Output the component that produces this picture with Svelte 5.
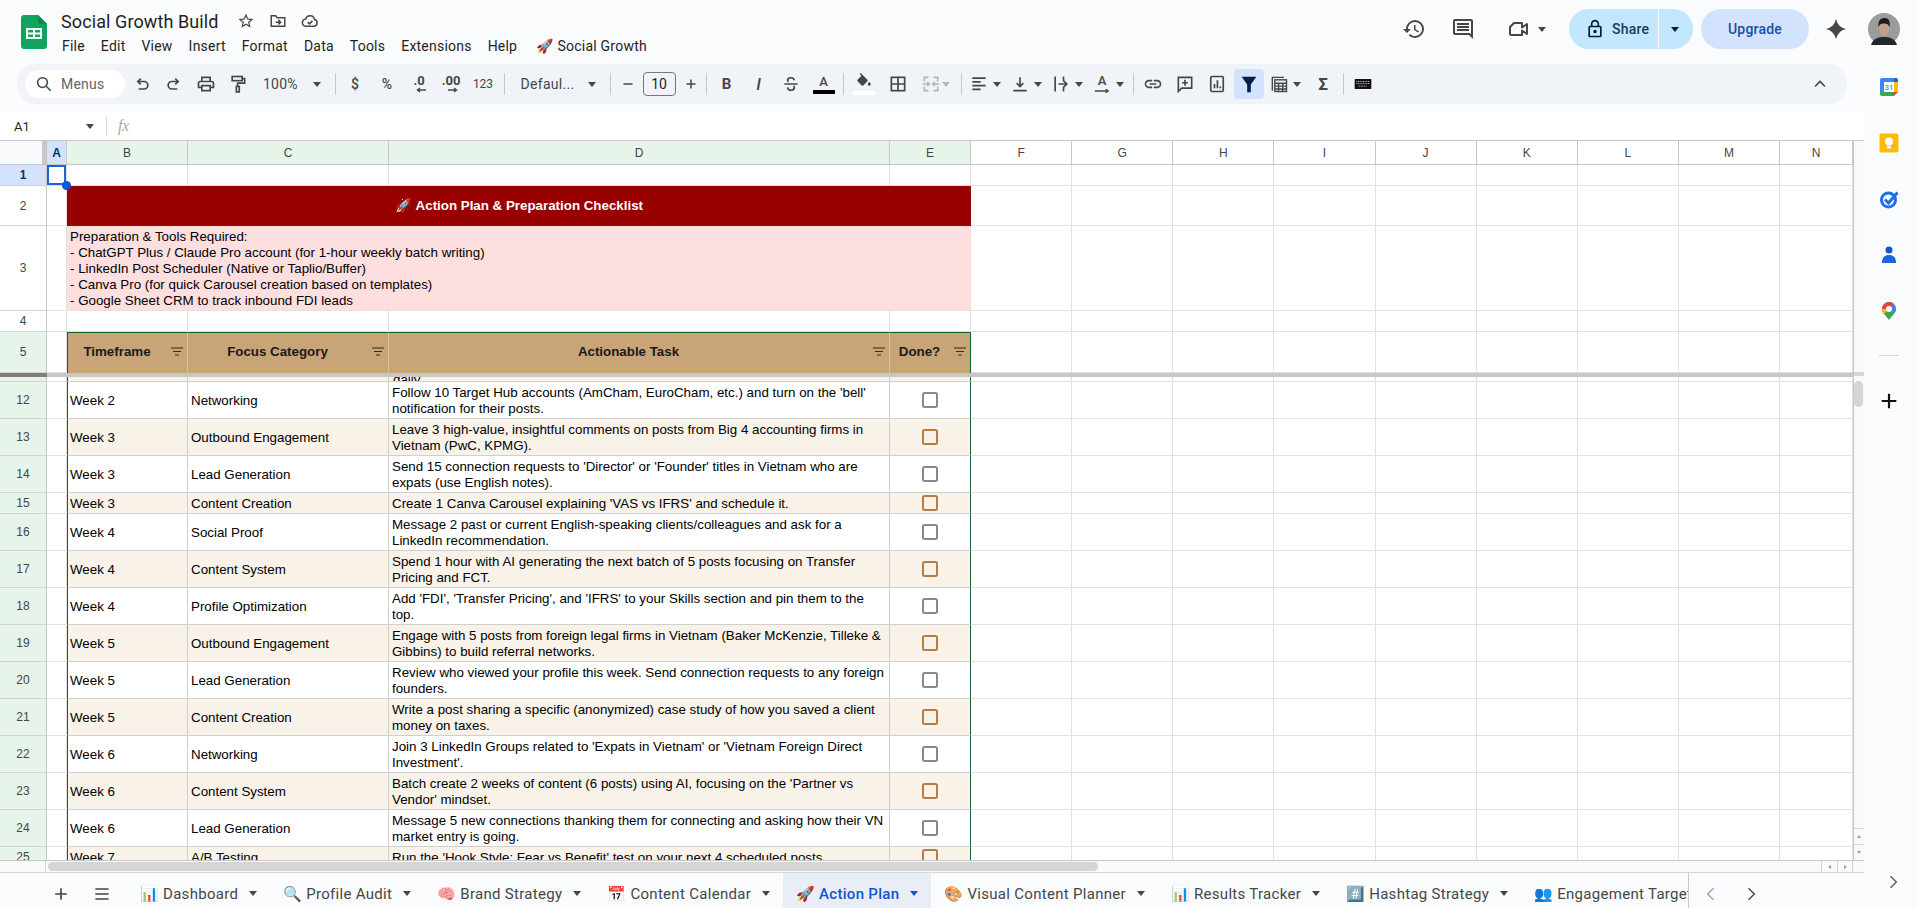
<script>
  const cols = ['F','G','H','I','J','K','L','M','N'];
  const rows = [
    [12,'Week 2','Networking',"Follow 10 Target Hub accounts (AmCham, EuroCham, etc.) and turn on the 'bell' notification for their posts."],
    [13,'Week 3','Outbound Engagement',"Leave 3 high-value, insightful comments on posts from Big 4 accounting firms in Vietnam (PwC, KPMG)."],
    [14,'Week 3','Lead Generation',"Send 15 connection requests to 'Director' or 'Founder' titles in Vietnam who are expats (use English notes)."],
    [15,'Week 3','Content Creation',"Create 1 Canva Carousel explaining 'VAS vs IFRS' and schedule it."],
    [16,'Week 4','Social Proof',"Message 2 past or current English-speaking clients/colleagues and ask for a LinkedIn recommendation."],
    [17,'Week 4','Content System',"Spend 1 hour with AI generating the next batch of 5 posts focusing on Transfer Pricing and FCT."],
    [18,'Week 4','Profile Optimization',"Add 'FDI', 'Transfer Pricing', and 'IFRS' to your Skills section and pin them to the top."],
    [19,'Week 5','Outbound Engagement',"Engage with 5 posts from foreign legal firms in Vietnam (Baker McKenzie, Tilleke & Gibbins) to build referral networks."],
    [20,'Week 5','Lead Generation',"Review who viewed your profile this week. Send connection requests to any foreign founders."],
    [21,'Week 5','Content Creation',"Write a post sharing a specific (anonymized) case study of how you saved a client money on taxes."],
    [22,'Week 6','Networking',"Join 3 LinkedIn Groups related to 'Expats in Vietnam' or 'Vietnam Foreign Direct Investment'."],
    [23,'Week 6','Content System',"Batch create 2 weeks of content (6 posts) using AI, focusing on the 'Partner vs Vendor' mindset."],
    [24,'Week 6','Lead Generation',"Message 5 new connections thanking them for connecting and asking how their VN market entry is going."],
    [25,'Week 7','A/B Testing',"Run the 'Hook Style: Fear vs Benefit' test on your next 4 scheduled posts."]
  ];
  const tabs = [
    ['📊','Dashboard'],['🔍','Profile Audit'],['🧠','Brand Strategy'],['📅','Content Calendar'],
    ['🚀','Action Plan'],['🎨','Visual Content Planner'],['📊','Results Tracker'],['#️⃣','Hashtag Strategy'],['👥','Engagement Targets']
  ];
  const menus = ['File','Edit','View','Insert','Format','Data','Tools','Extensions','Help'];
  const prep = ['Preparation & Tools Required:','- ChatGPT Plus / Claude Pro account (for 1-hour weekly batch writing)','- LinkedIn Post Scheduler (Native or Taplio/Buffer)','- Canva Pro (for quick Carousel creation based on templates)','- Google Sheet CRM to track inbound FDI leads'];
</script>

<div class="page">
  <header class="top">
    <svg class="logo" viewBox="0 0 26 34"><path d="M3 0H17L26 9V31a3 3 0 0 1-3 3H3a3 3 0 0 1-3-3V3a3 3 0 0 1 3-3Z" fill="#11a45f"/><path d="M17 0L26 9H19a2 2 0 0 1-2-2Z" fill="#0c8a4e"/><path d="M5 13H21V24H5ZM7 15V17.5H12V15ZM14 15V17.5H19V15ZM7 19.5V22H12V19.5ZM14 19.5V22H19V19.5Z" fill="#fff" fill-rule="evenodd"/></svg>
    <div class="titles">
      <div class="title-line">
        <span class="doc-title">Social Growth Build</span>
        <svg class="ti star" viewBox="0 0 24 24"><path d="M22 9.24l-7.19-.62L12 2 9.19 8.63 2 9.24l5.46 4.73L5.82 21 12 17.27 18.18 21l-1.63-7.03L22 9.24zM12 15.4l-3.76 2.27 1-4.28-3.32-2.88 4.38-.38L12 6.1l1.71 4.04 4.38.38-3.32 2.88 1 4.28L12 15.4z" fill="#444746"/></svg>
        <svg class="ti" viewBox="0 0 24 24" fill="none" stroke="#444746" stroke-width="2"><path d="M3 19V5h6l2 2.5h10V19Z"/><path d="M9 13.5h6M12.5 10.5l3 3-3 3"/></svg>
        <svg class="ti" viewBox="0 0 24 24" fill="none" stroke="#444746" stroke-width="2"><path d="M7 19a4.8 4.8 0 0 1-.7-9.6A6 6 0 0 1 18 10a4.6 4.6 0 0 1-.5 9Z"/><path d="M9 13.5l2.3 2.3 4-4"/></svg>
      </div>
      <nav class="menu">
        {#each menus as m}<span>{m}</span>{/each}
        <span class="ext"><span class="emo">🚀</span> Social Growth</span>
      </nav>
    </div>
    <div class="top-right">
      <svg class="tr hist" viewBox="0 0 24 24"><path d="M13 3a9 9 0 0 0-9 9H1l3.89 3.89.07.14L9 12H6c0-3.87 3.13-7 7-7s7 3.13 7 7-3.13 7-7 7c-1.93 0-3.68-.79-4.94-2.06l-1.42 1.42A8.954 8.954 0 0 0 13 21a9 9 0 0 0 0-18zm-1 5v5l4.28 2.54.72-1.21-3.5-2.08V8H12z" fill="#444746"/></svg>
      <svg class="tr cmt" viewBox="0 0 24 24"><path d="M21.99 4c0-1.1-.89-2-1.99-2H4c-1.1 0-2 .9-2 2v12c0 1.1.9 2 2 2h14l4 4-.01-18zM20 4v13.17L18.83 16H4V4h16zM6 12h12v2H6zm0-3h12v2H6zm0-3h12v2H6z" fill="#444746"/></svg>
      <svg class="tr meet" viewBox="0 0 24 24" fill="none" stroke="#444746" stroke-width="2" stroke-linejoin="round"><path d="M8 6H16V10.5L21 7V17L16 13.5V18H5.5A1.5 1.5 0 0 1 4 16.5V10Z"/></svg>
      <i class="caret meet-c"></i>
      <div class="share">
        <span class="share-l">
          <svg class="lock" viewBox="0 0 24 24"><path d="M18 8h-1V6c0-2.76-2.24-5-5-5S7 3.24 7 6v2H6c-1.1 0-2 .9-2 2v10c0 1.1.9 2 2 2h12c1.1 0 2-.9 2-2V10c0-1.1-.9-2-2-2zM9 6c0-1.66 1.34-3 3-3s3 1.34 3 3v2H9V6zm9 14H6V10h12v10zm-6-3c1.1 0 2-.9 2-2s-.9-2-2-2-2 .9-2 2 .9 2 2 2z" fill="#001d35"/></svg>
          Share
        </span>
        <span class="share-r"><i class="caret dark"></i></span>
      </div>
      <div class="upgrade">Upgrade</div>
      <svg class="gem" viewBox="0 0 24 24"><path d="M12 1Q14 10 23 12 14 14 12 23 10 14 1 12 10 10 12 1Z" fill="#444746"/></svg>
      <svg class="avatar" viewBox="0 0 32 32"><circle cx="16" cy="16" r="16" fill="#9a9d9c"/><path d="M3 32C5 25 11 24 16 24S27 25 29 32Z" fill="#23262a"/><ellipse cx="16" cy="15" rx="5" ry="7.500" fill="#c4a08c"/><path d="M10.500 14C9.500 7 13 5 17 5 21 5 22.500 9 21.500 14 20.500 11 18 10 15 10.500 13 10.500 11.500 11.500 10.500 14Z" fill="#1b1c1e"/></svg>
    </div>
  </header>

  <div class="body">
    <div class="left">
      <div class="toolbar">
        <div class="menus">
          <svg class="ic18" viewBox="0 0 24 24" fill="none" stroke="#444746" stroke-width="2"><circle cx="10" cy="10" r="6.500"/><path d="M15 15L21 21"/></svg>
          <span>Menus</span>
        </div>
        <button class="b first"><svg viewBox="0 0 24 24" fill="none" stroke="#444746" stroke-width="2"><path d="M7 9H14.500a4.500 4.500 0 0 1 0 9H8"/><path d="M10.500 5.500L7 9l3.500 3.500"/></svg></button>
        <button class="b"><svg viewBox="0 0 24 24" fill="none" stroke="#444746" stroke-width="2"><path d="M17 9H9.500a4.500 4.500 0 0 0 0 9H16"/><path d="M13.500 5.500L17 9l-3.500 3.500"/></svg></button>
        <button class="b"><svg viewBox="0 0 24 24"><path d="M19 8h-1V3H6v5H5c-1.660 0-3 1.340-3 3v6h4v4h12v-4h4v-6c0-1.660-1.340-3-3-3zM8 5h8v3H8V5zm8 12v2H8v-4h8v2zm2-2v-2H6v2H4v-4c0-.55.45-1 1-1h14c.55 0 1 .45 1 1v4h-2z" fill="#444746"/></svg></button>
        <button class="b"><svg viewBox="0 0 24 24" fill="none" stroke="#444746" stroke-width="2"><rect x="5" y="3" width="12" height="5"/><path d="M17 5.500H20V11H11.500V15"/><rect x="10" y="15" width="3.500" height="6.500"/></svg></button>
        <div class="zoom"><span>100%</span><i class="caret"></i></div>
        <i class="sep"></i>
        <button class="b t0">$</button>
        <button class="b t0">%</button>
        <button class="b t0 dec"><span>.0</span><svg viewBox="0 0 12 6"><path d="M11 3H3M5 1L2.500 3 5 5" fill="none" stroke="#444746" stroke-width="1.500"/></svg></button>
        <button class="b t0 dec"><span>.00</span><svg viewBox="0 0 12 6"><path d="M1 3H9M7 1L9.500 3 7 5" fill="none" stroke="#444746" stroke-width="1.500"/></svg></button>
        <button class="b t0 num">123</button>
        <i class="sep s2"></i>
        <div class="font"><span>Defaul...</span><i class="caret"></i></div>
        <i class="sep"></i>
        <button class="pm"><svg viewBox="0 0 24 24"><path d="M6 12H18" stroke="#444746" stroke-width="2"/></svg></button>
        <div class="fsize">10</div>
        <button class="pm"><svg viewBox="0 0 24 24"><path d="M6 12H18M12 6V18" stroke="#444746" stroke-width="2"/></svg></button>
        <i class="sep s3"></i>
        <button class="b t0 bold">B</button>
        <button class="b t0 ital">I</button>
        <button class="b"><svg viewBox="0 0 24 24" fill="none" stroke="#444746" stroke-width="2"><path d="M16 7.500C15.500 5.500 14 4.500 12 4.500S8 5.700 8 7.500c0 .8.3 1.500 1 2M8 16c.3 2.300 2 3.500 4 3.500s4-1.200 4-3.200c0-.8-.3-1.500-1-2M4 12H20"/></svg></button>
        <button class="b colA"><span>A</span><i></i></button>
        <i class="sep"></i>
        <button class="b fill"><svg viewBox="0 0 24 24"><path d="M16.560 8.940L7.620 0 6.210 1.410l2.380 2.380-5.150 5.150c-.59.59-.59 1.540 0 2.120l5.500 5.500c.29.29.68.44 1.060.44s.77-.15 1.060-.44l5.500-5.500c.59-.58.59-1.530 0-2.120zM19 11.500s-2 2.170-2 3.500c0 1.100.9 2 2 2s2-.9 2-2c0-1.330-2-3.500-2-3.500z" fill="#444746"/></svg><i></i></button>
        <button class="b ml2"><svg viewBox="0 0 24 24" fill="none" stroke="#444746" stroke-width="2"><rect x="4" y="4" width="16" height="16"/><path d="M12 4V20M4 12H20"/></svg></button>
        <div class="merge"><svg viewBox="0 0 24 24" fill="none" stroke="#b4b6b8" stroke-width="2"><path d="M9 4H4V9M4 15v5h5M15 4h5v5M20 15v5h-5M2 12H9M15 12H22M7.500 9.500L10 12l-2.500 2.500M16.500 9.500L14 12l2.500 2.500"/></svg><i class="caret light"></i></div>
        <i class="sep"></i>
        <div class="g first-g"><svg viewBox="0 0 24 24" fill="none" stroke="#444746" stroke-width="2"><path d="M4 5H20M4 9.500H14M4 14H20M4 18.500H14"/></svg><i class="caret"></i></div>
        <div class="g"><svg viewBox="0 0 24 24" fill="none" stroke="#444746" stroke-width="2"><path d="M12 4V15M8 11l4 4 4-4M4 20H20"/></svg><i class="caret"></i></div>
        <div class="g"><svg viewBox="0 0 24 24" fill="none" stroke="#444746" stroke-width="2"><path d="M5 3V21M15 3V9M15 15V21M9 12H19M15.500 8.500L19 12l-3.500 3.500"/></svg><i class="caret"></i></div>
        <div class="g"><span class="rot"><span>A</span><svg viewBox="0 0 20 6"><path d="M2 3H17M14 1L17 3 14 5" fill="none" stroke="#444746" stroke-width="1.500"/></svg></span><i class="caret"></i></div>
        <i class="sep"></i>
        <button class="b"><svg viewBox="0 0 24 24"><path d="M3.900 12c0-1.710 1.390-3.100 3.100-3.100h4V7H7c-2.760 0-5 2.240-5 5s2.240 5 5 5h4v-1.900H7c-1.710 0-3.100-1.390-3.100-3.100zM8 13h8v-2H8v2zm9-6h-4v1.900h4c1.710 0 3.100 1.390 3.100 3.100s-1.390 3.100-3.100 3.100h-4V17h4c2.760 0 5-2.240 5-5s-2.240-5-5-5z" fill="#444746"/></svg></button>
        <button class="b"><svg viewBox="0 0 24 24" fill="none" stroke="#444746" stroke-width="2"><path d="M4 4H20V17H8L4 21Z"/><path d="M12 7V14M8.500 10.500H15.500"/></svg></button>
        <button class="b"><svg viewBox="0 0 24 24" fill="none" stroke="#444746" stroke-width="2"><rect x="4.500" y="3" width="15" height="18" rx="1.500"/><path d="M9 17V12M12.500 17V7.500M16 17V15"/></svg></button>
        <button class="b filt"><svg viewBox="0 0 24 24"><path d="M4 4H20L14 12.500V21H10V12.500Z" fill="#041e49"/></svg></button>
        <div class="g"><svg viewBox="0 0 24 24" fill="none" stroke="#444746" stroke-width="1.700"><path d="M4 20V4H18"/><rect x="7" y="7" width="14" height="14"/><path d="M7 11H21M7 14.500H21M7 18H21M11.500 11V21M16.500 11V21"/></svg><i class="caret"></i></div>
        <button class="b t0 sig">Σ</button>
        <i class="sep"></i>
        <button class="b"><svg viewBox="0 0 24 24"><rect x="2" y="6" width="20" height="12" rx="1" fill="#111"/><path d="M4 9H20M4 11.500H20M7 14.500H17" stroke="#ddd" stroke-width="1" stroke-dasharray="1.200 .8"/></svg></button>
        <svg class="chev" viewBox="0 0 24 24" fill="none" stroke="#444746" stroke-width="2"><path d="M6 15L12 9l6 6"/></svg>
      </div>

      <div class="formula">
        <span class="cellref">A1</span><i class="caret"></i><i class="fsep"></i><span class="fx">fx</span>
      </div>

      <div class="sheet">
        <div class="cells">
          <div class="gr colhead">
            <div class="corner"></div>
            <div class="ch sel">A</div>
            <div class="ch hi">B</div><div class="ch hi">C</div><div class="ch hi">D</div><div class="ch hi">E</div>
            {#each cols as c}<div class="ch">{c}</div>{/each}
          </div>

          <div class="gr r21">
            <div class="rh sel">1</div>
            <div class="c a1"></div>
            <div class="c"></div><div class="c"></div><div class="c"></div><div class="c"></div>
            {#each cols as c}<div class="c"></div>{/each}
          </div>
          <div class="gr r40">
            <div class="rh">2</div><div class="c"></div>
            <div class="c banner"><span class="emo">🚀</span> Action Plan &amp; Preparation Checklist</div>
            {#each cols as c}<div class="c"></div>{/each}
          </div>
          <div class="gr r85">
            <div class="rh">3</div><div class="c"></div>
            <div class="c prep"><div>{#each prep as p}<div>{p}</div>{/each}</div></div>
            {#each cols as c}<div class="c"></div>{/each}
          </div>
          <div class="gr r21">
            <div class="rh">4</div><div class="c"></div>
            <div class="c"></div><div class="c"></div><div class="c"></div><div class="c"></div>
            {#each cols as c}<div class="c"></div>{/each}
          </div>
          <div class="gr r41">
            <div class="rh hi">5</div><div class="c"></div>
            {#each ['Timeframe','Focus Category','Actionable Task','Done?'] as h, i}
              <div class="c th" class:lft={i===0} class:rgt={i===3}>
                <span>{h}</span>
                <svg class="fl" viewBox="0 0 12 9"><path d="M0 1H12M2 4.500H10M4 8H8" stroke="#2b2b2b" stroke-width="1.100"/></svg>
              </div>
            {/each}
            {#each cols as c}<div class="c"></div>{/each}
          </div>

          <div class="freeze"><i></i><b></b></div>

          <div class="gr r5">
            <div class="rh hi"></div><div class="c"></div>
            <div class="c t beige lft"></div><div class="c t beige"></div>
            <div class="c t beige sliver"><span>daily</span></div>
            <div class="c t beige rgt"></div>
            {#each cols as c}<div class="c"></div>{/each}
          </div>

          {#each rows as r}
            <div class="gr" class:r37={r[0]!==15 && r[0]!==25} class:r21={r[0]===15 || r[0]===25}>
              <div class="rh hi">{r[0]}</div><div class="c"></div>
              <div class="c t lft" class:beige={r[0]%2===1}>{r[1]}</div>
              <div class="c t" class:beige={r[0]%2===1}>{r[2]}</div>
              <div class="c t task" class:beige={r[0]%2===1}>{r[3]}</div>
              <div class="c t rgt chk" class:beige={r[0]%2===1}><i class="box" class:tan={r[0]%2===1}></i></div>
              {#each cols as c}<div class="c"></div>{/each}
            </div>
          {/each}
        </div>
        <div class="vscroll">
          <i class="vs-gap1"></i>
          <i class="vs-freeze"></i>
          <i class="vs-gap2"></i>
          <i class="vs-thumb"></i>
          <i class="vs-fill"></i>
          <div class="vs-btn"><span class="up"></span></div>
          <div class="vs-btn"><span class="dn"></span></div>
        </div>
      </div>

      <div class="hscroll">
        <i class="hs-corner"></i>
        <i class="hs-thumb"></i>
        <span class="hs-btn"><i class="lf"></i></span>
        <span class="hs-btn"><i class="rt"></i></span>
      </div>

      <div class="tabs">
        <svg class="add" viewBox="0 0 24 24"><path d="M5 12H19M12 5V19" stroke="#444746" stroke-width="2"/></svg>
        <svg class="all" viewBox="0 0 24 24"><path d="M4 6H20M4 12H20M4 18H20" stroke="#444746" stroke-width="2"/></svg>
        <div class="strip">
          {#each tabs as t, i}
            <div class="tab" class:on={i===4}>
              <span class="emo tabemo">{t[0]}</span>
              <span class="tl">{t[1]}</span>
              <i class="caret"></i>
            </div>
          {/each}
        </div>
        <svg class="nav dim" viewBox="0 0 24 24" fill="none" stroke="#9aa0a6" stroke-width="1.600"><path d="M15 5L8 12l7 7"/></svg>
        <svg class="nav" viewBox="0 0 24 24" fill="none" stroke="#444746" stroke-width="1.600"><path d="M9 5l7 7-7 7"/></svg>
      </div>
    </div>

    <aside class="side">
      <svg class="si" viewBox="0 0 20 20"><path d="M1 3a2 2 0 0 1 2-2H15V5H5V15H1Z" fill="#4285f4"/><path d="M15 1H17a2 2 0 0 1 2 2V5H15Z" fill="#1967d2"/><path d="M15 5H19V15H15Z" fill="#fbbc04"/><path d="M1 15H15V19H3a2 2 0 0 1-2-2Z" fill="#34a853"/><path d="M15 15H19L15 19Z" fill="#ea4335"/><rect x="5" y="5" width="10" height="10" fill="#fff"/><text x="10" y="13" text-anchor="middle" class="cal31">31</text></svg>
      <svg class="si" viewBox="0 0 20 20"><rect x="0.500" y="0.500" width="19" height="19" rx="2" fill="#fbbc04"/><circle cx="10" cy="8.500" r="4" fill="#fff"/><rect x="8" y="13" width="4" height="2.500" fill="#fff"/></svg>
      <svg class="si" viewBox="0 0 20 20" fill="none"><circle cx="9.500" cy="11" r="7" stroke="#1f6fe8" stroke-width="3"/><path d="M6 10.500L9.500 14 18.500 3.500" stroke="#1f6fe8" stroke-width="3"/></svg>
      <svg class="si" viewBox="0 0 20 20"><circle cx="10" cy="5" r="3.500" fill="#0b57d0"/><path d="M3 18C3 12 6 10 10 10S17 12 17 18Z" fill="#1a66db"/></svg>
      <svg class="si" viewBox="0 0 20 20"><path d="M10 1a7 7 0 0 1 7 7c0 4-4 6.500-7 11C7 14.500 3 12 3 8a7 7 0 0 1 7-7Z" fill="#34a853"/><path d="M10 1a7 7 0 0 1 5 2.100L5 13C3.800 11.500 3 10 3 8a7 7 0 0 1 7-7Z" fill="#ea4335"/><path d="M15 3.100A7 7 0 0 1 17 8c0 1.500-.6 2.800-1.500 4L10 8Z" fill="#4285f4"/><path d="M10 8L5 13 3.500 10.500 3 8Z" fill="#fbbc04"/><circle cx="10" cy="8" r="3" fill="#fff"/></svg>
      <i class="sd"></i>
      <svg class="sp" viewBox="0 0 24 24"><path d="M4 12H20M12 4V20" stroke="#111" stroke-width="2.400"/></svg>
      <svg class="collapse" viewBox="0 0 24 24" fill="none" stroke="#5f6368" stroke-width="1.800"><path d="M9 5l7 7-7 7"/></svg>
    </aside>
  </div>
</div>

<style>
  :global(body) { margin: 0; background: #f9fbfd; }
  .page {
    width: 1917px; height: 908px; overflow: hidden; background: #f9fbfd;
    font-family: Roboto, "Noto Sans", sans-serif; color: #1f1f1f;
  }
  i { display: block; font-style: normal; }
  .emo { font-family: "Noto Color Emoji", "Noto Emoji", "DejaVu Sans", sans-serif; font-weight: 400; }

  .caret { width: 0; height: 0; border: 4px solid transparent; border-top: 5px solid #444746; border-bottom: 0; flex: none; }
  .caret.dark { border-top-color: #001d35; }
  .caret.light { border-top-color: #b4b6b8; }

  /* top */
  .top { height: 64px; display: flex; align-items: flex-start; position: relative; }
  .logo { width: 26px; height: 34px; margin: 15px 14px 0 21px; flex: none; }
  .titles { padding-top: 8px; }
  .title-line { display: flex; align-items: center; height: 26px; }
  .doc-title { font-size: 18px; letter-spacing: .1px; color: #1f1f1f; width: 170px; white-space: nowrap; }
  .ti { width: 18px; height: 18px; margin-right: 14px; flex: none; }
  .ti.star { margin-left: 6px; }
  .menu { display: flex; font-size: 14px; letter-spacing: .22px; height: 24px; align-items: center; color: #1f1f1f; margin-left: 1px; }
  .menu span { margin-right: 16px; white-space: nowrap; }
  .menu .ext { margin-left: 3px; margin-right: 0; }
  .menu .emo { margin: 0; font-size: 14px; }

  .top-right { margin-left: auto; display: flex; align-items: center; height: 40px; margin-top: 9px; margin-right: 17px; }
  .tr { width: 24px; height: 24px; flex: none; }
  .cmt { margin-left: 25px; }
  .meet { margin-left: 31px; }
  .meet-c { margin-left: 8px; margin-right: 23px; }
  .share { display: flex; height: 40px; width: 124px; border-radius: 20px; background: #c2e7ff; overflow: hidden; color: #0f3f5f; font-size: 14px; font-weight: 500; letter-spacing: .2px; }
  .share-l { width: 90px; display: flex; align-items: center; padding-left: 16px; box-sizing: border-box; gap: 7px; border-right: 1px solid #f4fbff; }
  .lock { width: 20px; height: 20px; }
  .share-r { flex: 1; display: flex; align-items: center; justify-content: center; padding-right: 2px; }
  .upgrade { width: 108px; height: 40px; margin-left: 8px; border-radius: 20px; background: #d3e3fd; color: #1a4fa0; font-size: 14px; font-weight: 500; letter-spacing: .2px; display: flex; align-items: center; justify-content: center; }
  .gem { width: 22px; height: 22px; margin-left: 16px; flex: none; }
  .avatar { width: 32px; height: 32px; margin-left: 21px; flex: none; }

  /* layout */
  .body { display: flex; height: 844px; }
  .left { width: 1864px; flex: none; }
  .side { flex: 1; display: flex; flex-direction: column; align-items: center; padding-top: 13px; padding-right: 3px; position: relative; }

  /* toolbar */
  .toolbar {
    height: 40px; margin: 0 17px; border-radius: 20px; background: #f0f4f9;
    display: flex; align-items: center; padding-left: 8px; color: #444746; box-sizing: border-box;
  }
  .menus { width: 100px; height: 28px; background: #fff; border-radius: 14px; display: flex; align-items: center; box-sizing: border-box; padding-left: 10px; gap: 8px; font-size: 14px; color: #5f6368; flex: none; letter-spacing: .2px; }
  .ic18 { width: 18px; height: 18px; }
  .b, .pm { border: 0; padding: 0; background: none; font: inherit; color: inherit; display: flex; align-items: center; justify-content: center; height: 30px; flex: none; }
  .b { width: 32px; }
  .b svg { width: 20px; height: 20px; }
  .first { margin-left: 1px; }
  .t0 { font-family: Roboto, sans-serif; font-size: 14px; font-weight: 500; }
  .dec { position: relative; font-size: 13px; font-weight: 700; align-items: flex-start; padding-top: 5px; box-sizing: border-box; line-height: 13px; }
  .dec svg { position: absolute; width: 12px; height: 6px; left: 12px; top: 18px; }
  .num { font-size: 12px; font-weight: 400; }
  .zoom { width: 77px; flex: none; display: flex; align-items: center; font-size: 14px; padding-left: 9px; box-sizing: border-box; letter-spacing: .2px; }
  .zoom .caret { margin-left: 15px; }
  .sep { width: 8px; height: 22px; flex: none; position: relative; }
  .sep::after { content: ""; position: absolute; left: 3.500px; top: 0; bottom: 0; width: 1px; background: #c7c7c7; }
  .s2 { margin-left: 1.500px; }
  .s3 { margin-left: -1px; }
  .font { width: 98px; flex: none; display: flex; align-items: center; box-sizing: border-box; padding-left: 12px; font-size: 14px; letter-spacing: .3px; }
  .font span { width: 67px; }
  .pm { width: 26px; }
  .pm svg { width: 18px; height: 18px; }
  .fsize { width: 33px; height: 24px; margin: 0 2px; flex: none; box-sizing: border-box; border: 1px solid #747775; border-radius: 4px; display: flex; align-items: center; justify-content: center; font-size: 14px; color: #1f1f1f; }
  .bold { font-weight: 700; font-size: 15px; }
  .ital { font-style: italic; font-size: 17px; font-weight: 500; }
  .colA { flex-direction: column; font-size: 13px; font-weight: 500; line-height: 14px; margin-left: 1px; }
  .colA i { width: 22px; height: 4px; background: #000; margin-top: 1px; }
  .fill { flex-direction: column; margin-top: -1px; height: 34px; }
  .b.fill svg { width: 18px; height: 18px; }
  .fill i { width: 22px; height: 4px; background: #fff; margin-top: 0; }
  .ml2 { margin-left: 2px; }
  .merge { width: 43px; margin-left: 1px; flex: none; display: flex; align-items: center; padding-left: 6px; box-sizing: border-box; gap: 1px; }
  .merge svg { width: 20px; height: 20px; flex: none; }
  .merge .caret { margin-left: 0; }
  .g { width: 41px; flex: none; display: flex; align-items: center; padding-left: 4px; box-sizing: border-box; }
  .g > svg { width: 20px; height: 20px; flex: none; }
  .g .caret { margin-left: 4px; }
  .first-g { margin-left: -.500px; }
  .rot { width: 20px; height: 24px; position: relative; font-size: 13px; text-align: center; font-weight: 500; line-height: 17px; display: block; }
  .rot svg { position: absolute; left: 1px; top: 16px; width: 18px; height: 6px; }
  .filt { background: #d3e3fd; border-radius: 4px; width: 30px; margin: 0 1px; }
  .filt svg { width: 22px; height: 22px; }
  .sig { font-size: 17px; font-weight: 700; margin-left: 1px; }
  .chev { width: 20px; height: 20px; margin-left: auto; margin-right: 17px; flex: none; }

  /* formula */
  .formula { height: 28px; margin-top: 8px; background: #fff; display: flex; align-items: center; font-size: 13px; color: #444746; }
  .cellref { width: 86px; padding-left: 14px; box-sizing: border-box; font-size: 13px; color: #1f1f1f; }
  .fsep { width: 1px; height: 20px; background: #dadce0; margin-left: 12px; }
  .fx { margin-left: 11px; font-family: "Liberation Serif", serif; font-style: italic; font-size: 16px; color: #a6a8aa; letter-spacing: -.5px; }

  /* grid */
  .sheet { display: flex; height: 720px; background: #fff; }
  .cells { width: 1853px; flex: none; overflow: hidden; position: relative; }
  .gr { display: grid; grid-template-columns: 47px 20px 121px 201px 501px 81px repeat(8, 101.125px) 73px; }
  .r21 { height: 21px; } .r40 { height: 40px; } .r85 { height: 85px; } .r41 { height: 41px; } .r5 { height: 5px; } .r37 { height: 37px; }
  .colhead { height: 25px; box-sizing: border-box; border-top: 1px solid #c7c7c7; }
  .corner { background: #f8f9fa; border-right: 5px solid #c7c7c7; border-bottom: 1px solid #c7c7c7; }
  .ch { display: flex; align-items: center; justify-content: center; font-family: "Liberation Sans", Arial, sans-serif; font-size: 12px; color: #444746; border-right: 1px solid #c7c7c7; border-bottom: 1px solid #c7c7c7; box-sizing: border-box; background: #fff; }
  .ch.hi { background: #e6f4ea; }
  .ch.sel { background: #d3e3fd; font-weight: 700; color: #0a2f66; }
  .rh { display: flex; align-items: center; justify-content: center; font-family: "Liberation Sans", Arial, sans-serif; font-size: 12px; color: #444746; background: #fff; border-right: 1px solid #c7c7c7; border-bottom: 1px solid #d4d4d4; box-sizing: border-box; }
  .rh.hi { background: #e6f4ea; }
  .rh.sel { background: #d3e3fd; font-weight: 700; color: #0a2f66; }
  .c { box-sizing: border-box; border-right: 1px solid #e1e1e1; border-bottom: 1px solid #e1e1e1; background: #fff; min-width: 0; overflow: hidden; font-family: "Liberation Sans", Arial, sans-serif; font-size: 13.330px; line-height: 16px; color: #000; }
  .a1 { overflow: visible; position: relative; z-index: 3; box-shadow: inset 0 0 0 2px #1a66d6; }
  .a1::after { content: ""; position: absolute; width: 9px; height: 9px; border-radius: 50%; background: #0b57d0; right: -5px; bottom: -5px; border: 0; }
  .banner { grid-column: span 4; background: #990000; color: #fff; font-weight: 700; display: flex; align-items: center; justify-content: center; gap: 4px; border-right: 0; border-bottom: 0; }
  .prep { grid-column: span 4; background: #fddfdf; padding: 2px 3px 0; display: flex; align-items: center; border-bottom: 1px solid #e1e1e1; border-right: 0; }
  .th { background: #c9a477; font-weight: 700; color: #1a1a1a; display: flex; align-items: center; justify-content: center; padding: 0 21px 2px 0; position: relative; border-right: 1px solid #d8c3a6; border-bottom: 0; border-top: 1px solid #14602f; }
  .fl { position: absolute; width: 12px; height: 9px; right: 4px; top: 14px; }
  .lft { border-left: 1px solid #14602f; }
  .rgt { border-right: 1px solid #14602f; }
  .t { border-bottom-color: #cfcfcf; border-right-color: #cfcfcf; padding: 1.500px 3px 0; display: flex; align-items: center; }
  .t.lft { padding-left: 2px; }
  .t.rgt { border-right-color: #14602f; }
  .beige { background: #f8f2e9; }
  .sliver { align-items: flex-end; overflow: hidden; padding-top: 0; }
  .sliver span { margin-bottom: -7px; margin-left: 1px; }
  .task { padding-top: 1px; }
  .chk { justify-content: center; padding: 0; }
  .box { width: 16px; height: 16px; box-sizing: border-box; border: 2px solid #8a8a8a; border-radius: 2.500px; flex: none; background: #fff; }
  .box.tan { border-color: #b57e47; background: transparent; }

  .freeze { display: flex; height: 4px; }
  .freeze i { width: 47px; background: #7f7f7f; }
  .freeze b { flex: 1; background: #c7c7c7; }

  /* vscroll */
  .vscroll { flex: 1; display: flex; flex-direction: column; border-left: 1px solid #c7c7c7; background: #f8f9fa; box-sizing: border-box; }
  .vs-gap1 { height: 232px; flex: none; border-top: 1px solid #c7c7c7; box-sizing: border-box; }
  .vs-freeze { height: 4px; flex: none; background: #d6d6d6; }
  .vs-gap2 { height: 5px; flex: none; }
  .vs-thumb { height: 26px; width: 9px; background: #d5d5d5; border-radius: 5px; flex: none; }
  .vs-fill { flex: 1; }
  .vs-btn { height: 16px; border-top: 1px solid #d4d4d4; display: flex; align-items: center; justify-content: center; flex: none; box-sizing: border-box; }
  .up { width: 0; height: 0; border: 2.500px solid transparent; border-bottom: 3px solid #9a9a9a; border-top: 0; }
  .dn { width: 0; height: 0; border: 2.500px solid transparent; border-top: 3px solid #9a9a9a; border-bottom: 0; }

  /* hscroll */
  .hscroll { height: 13px; display: flex; align-items: center; background: #f8f9fa; border-top: 1px solid #c7c7c7; border-bottom: 1px solid #d6d6d6; box-sizing: border-box; position: relative; width: 1864px; }
  .hs-corner { width: 46px; height: 100%; border-right: 1px solid #d6d6d6; box-sizing: border-box; flex: none; }
  .hs-thumb { width: 1050px; height: 9px; background: #d5d5d5; border-radius: 5px; margin-left: 2px; }
  .hs-btn { width: 16px; height: 100%; border-left: 1px solid #d4d4d4; box-sizing: border-box; display: flex; align-items: center; justify-content: center; flex: none; }
  .hs-btn:first-of-type { margin-left: auto; }
  .hs-btn:last-of-type { margin-right: 11px; border-right: 1px solid #d4d4d4; }
  .lf { width: 0; height: 0; border: 2.500px solid transparent; border-right: 3px solid #9a9a9a; border-left: 0; }
  .rt { width: 0; height: 0; border: 2.500px solid transparent; border-left: 3px solid #9a9a9a; border-right: 0; }

  /* tabs */
  .tabs { height: 35px; display: flex; align-items: center; width: 1864px; position: relative; }
  .add { width: 20px; height: 20px; margin: 6px 0 0 51px; flex: none; }
  .all { width: 20px; height: 20px; margin: 6px 0 0 21px; flex: none; }
  .strip { display: flex; width: 1562px; margin-left: 15px; overflow: hidden; height: 35px; border-right: 1px solid #c7c7c7; box-sizing: border-box; flex: none; }
  .tab { display: flex; align-items: center; padding: 6px 13px 0; box-sizing: border-box; flex: none; font-size: 15px; letter-spacing: .3px; color: #444746; height: 35px; font-weight: 400; }
  .tabemo { width: 16px; font-size: 15px; text-align: center; flex: none; letter-spacing: 0; }
  .tl { margin-left: 7px; margin-right: 11px; white-space: nowrap; }
  .tab.on { background: #e9eef6; color: #0b57d0; font-weight: 500; }
  .tab.on .caret { border-top-color: #0b57d0; }
  .nav { width: 20px; height: 20px; flex: none; margin: 6px 0 0 12px; }
  .nav + .nav { margin-left: 20px; }

  /* side */
  .si { width: 20px; height: 20px; flex: none; margin-bottom: 36px; }
  .sd { width: 20px; height: 1px; background: #d6d6d6; margin-top: -2px; margin-bottom: 34px; }
  .sp { width: 22px; height: 22px; flex: none; }
  .cal31 { font-family: Roboto, sans-serif; font-size: 7.500px; font-weight: 500; fill: #4285f4; }
  .collapse { position: absolute; width: 20px; height: 20px; left: 19px; top: 808px; }
</style>
